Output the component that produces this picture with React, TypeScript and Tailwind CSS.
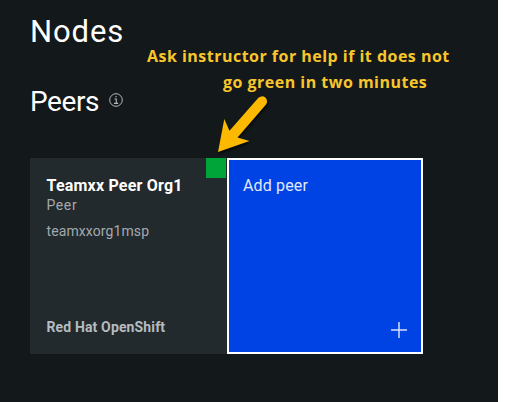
export default function App() {
  return (
    <div className="h-[402px] w-[505px] overflow-hidden bg-white font-['Roboto',sans-serif]">
      <main className="relative h-[402px] w-[498px] bg-[#13181a] pl-[30px] pt-3">
        <h1 className="h-10 text-[31px] leading-10 tracking-[0.9px] text-white">Nodes</h1>
        <div className="mt-[30px] flex h-10 items-center text-white">
          <h2 className="w-[79px] whitespace-nowrap text-[28px] leading-10 tracking-[-0.4px]">Peers</h2>
          <svg className="-mt-1 h-[14px] w-[14px]" viewBox="0 0 14 14" fill="none" stroke="#b4babc">
            <circle cx="7" cy="7" r="6.3" strokeWidth="1" />
            <path d="M5.5 6h1.8v4.2M5 10.4h4.2" strokeWidth="1.1" />
            <circle cx="7" cy="3.7" r=".7" fill="#b4babc" stroke="none" />
          </svg>
        </div>
        <div className="mt-9 flex h-[196px]">
          <section className="flex w-[197px] flex-col whitespace-nowrap bg-[#232a2d] pl-[16.5px] text-[14px] text-[#a2a9ad]">
            <div className="flex h-[37px] justify-between">
              <h3 className="pt-[18px] text-[16px] font-bold leading-5 tracking-[0.2px] text-white">Teamxx Peer Org1</h3>
              <span className="mr-px h-5 w-5 bg-[#00a53a]" />
            </div>
            <p className="h-5 leading-5 tracking-[0.6px]">Peer</p>
            <p className="mt-1.5 leading-5 tracking-[0.1px]">teamxxorg1msp</p>
            <p className="mb-[17px] mt-auto font-bold leading-5 tracking-[0.14px] text-[#b5bcc0]">Red Hat OpenShift</p>
          </section>
          <button className="flex w-[196px] flex-col border-2 border-white bg-[#0043e4] pl-3.5 pt-4 text-left">
            <span className="text-[16px] leading-5 tracking-[0.15px] text-[#e1e9fc]">Add peer</span>
            <svg className="mb-3.5 ml-auto mr-3.5 mt-auto h-4 w-4" viewBox="0 0 16 16" fill="none" stroke="#d4e0fb" strokeWidth="1.5">
              <path d="M8 0v16M0 8h16" />
            </svg>
          </button>
        </div>
        <div className="absolute left-[147px] top-[43px] whitespace-nowrap font-['Open_Sans',sans-serif] text-[16px] font-bold leading-[26px] tracking-[0.48px] text-[#f7c62c]">
          <p>Ask instructor for help if it does not</p>
          <p className="pl-[76px]">go green in two minutes</p>
        </div>
        <svg className="absolute left-[210px] top-[90px] h-[70px] w-[65px] drop-shadow-[1px_2px_1px_rgba(0,0,0,0.6)]" viewBox="210 90 65 70">
          <path d="M218 152L224.3 119L229.5 130.8L258.2 98.1A5 5 0 0 1 265.8 104.7L237.5 137.5L249.5 141Z" fill="#fdb900" />
        </svg>
      </main>
    </div>
  );
}
